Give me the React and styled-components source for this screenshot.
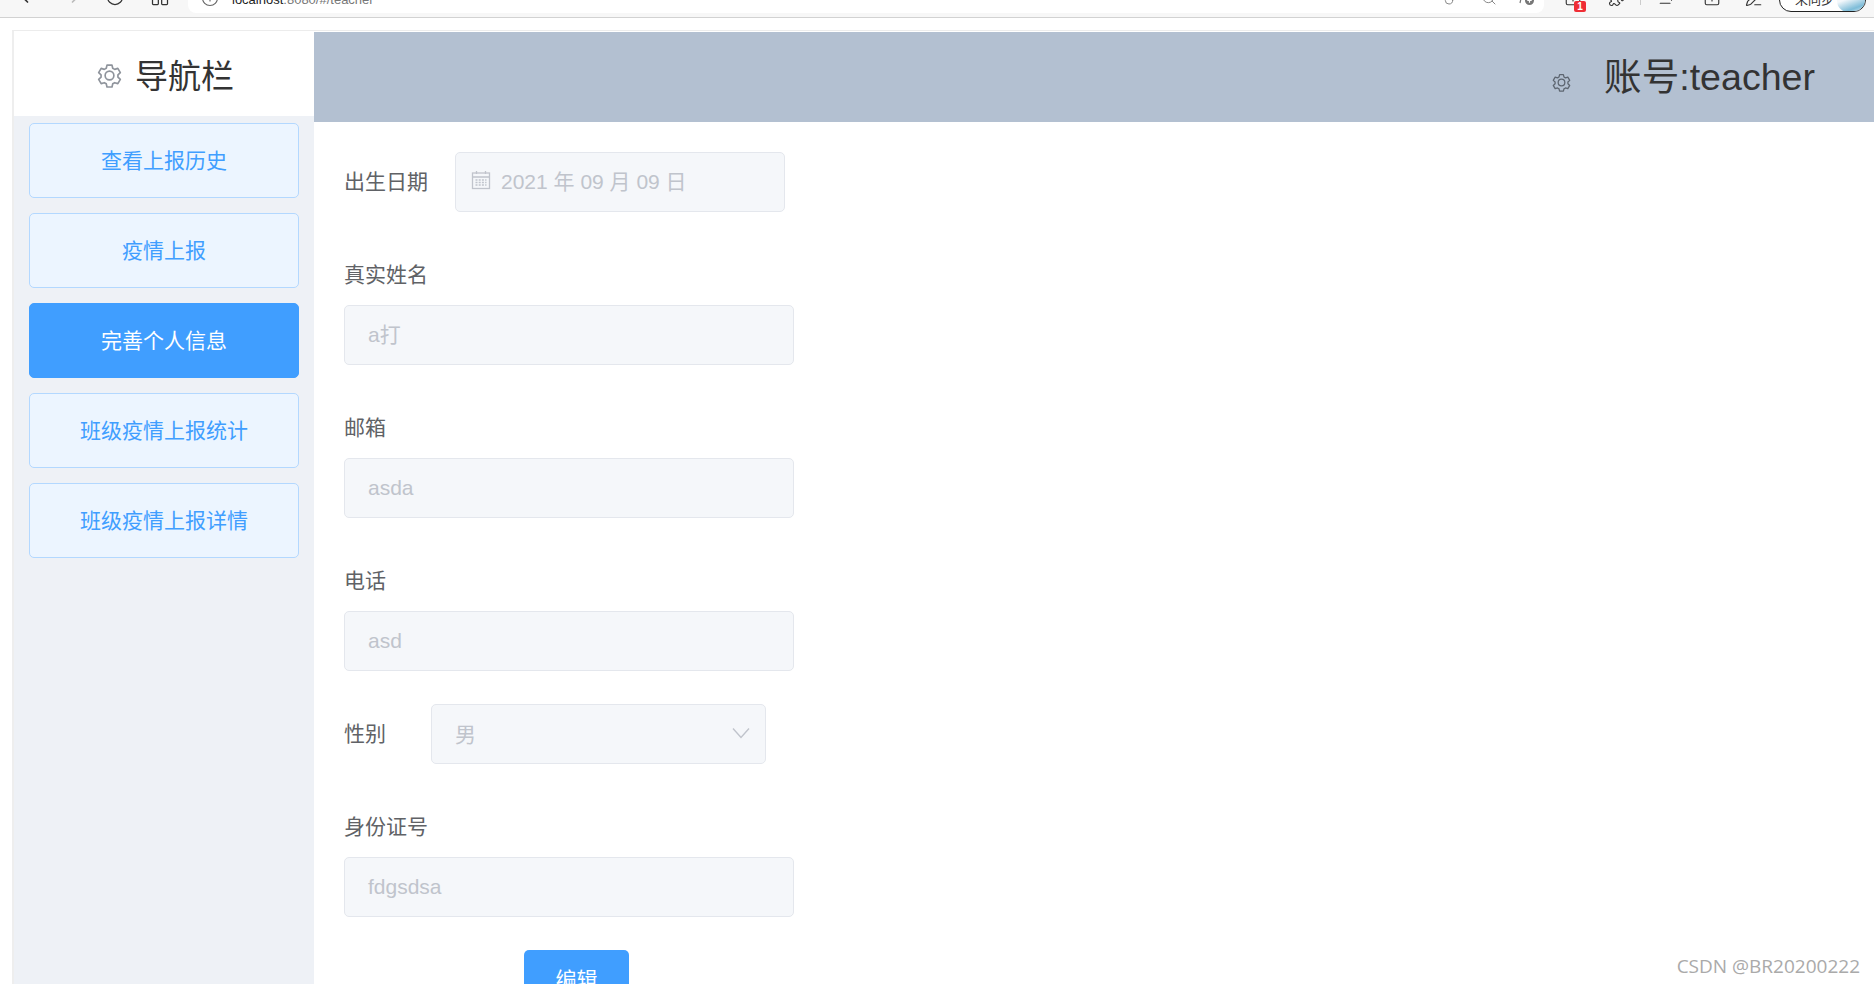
import React from 'react';
import styled, { createGlobalStyle } from 'styled-components';
import { ChevronLeft, ChevronRight, RotateCw, LayoutGrid, Info, Key, Search, Puzzle, ListPlus, SquarePlus, PenLine } from 'lucide-react';

const GlobalStyle = createGlobalStyle`
  html, body { margin: 0; padding: 0; background: #fff; height: 100%; overflow: hidden; }
  body { font-family: "Liberation Sans", "Noto Sans CJK SC", sans-serif; }
`;

const Page = styled.div`
  position: relative;
  width: 1874px;
  height: 984px;
  overflow: hidden;
  background: #fff;
`;

const BrowserBar = styled.div`
  height: 17px;
  background: #f7f7f7;
  border-bottom: 1px solid #d2d2d2;
  display: flex;
  align-items: flex-end;
  overflow: hidden;
`;

const BarIcon = styled.span`
  position: relative;
  flex: none;
  display: block;
  line-height: 0;
  margin-left: ${p => p.$ml}px;
  margin-right: ${p => p.$mr || 0}px;
  margin-bottom: ${p => p.$mb || 10}px;
  color: ${p => p.$c || '#333'};
`;

const Address = styled.div`
  width: 1356px;
  height: 13px;
  margin-left: 18px;
  margin-bottom: 4px;
  flex: none;
  background: #fff;
  border-radius: 0 0 8px 8px;
  display: flex;
  align-items: flex-end;
  overflow: hidden;
  font-size: 13px;
  color: #777;
`;

const Url = styled.span`
  margin-left: 13px;
  margin-bottom: 6px;
  line-height: 15px;
  white-space: nowrap;
  b { color: #222; font-weight: 400; }
`;

const Spacer = styled.span`
  flex: 1;
`;

const Badge = styled.span`
  position: absolute;
  left: 10px;
  top: 12px;
  width: 12px;
  height: 11px;
  background: #ef2d35;
  border-radius: 2px;
  color: #fff;
  font-size: 10px;
  font-weight: 700;
  line-height: 11px;
  text-align: center;
`;

const Divider = styled.span`
  flex: none;
  width: 1px;
  height: 5px;
  margin: 0 0 12px 14px;
  background: #ccc;
`;

const Profile = styled.div`
  position: relative;
  flex: none;
  width: 87px;
  height: 24px;
  margin: 0 0 5px 16px;
  border: 1px solid #222;
  border-radius: 13px;
  background: #fff;
  font-size: 13px;
  color: #333;
  overflow: hidden;
  line-height: 22px;
  padding-left: 15px;
  box-sizing: border-box;
`;

const Avatar = styled.span`
  position: absolute;
  right: 0;
  top: 0;
  width: 28px;
  height: 24px;
  background: linear-gradient(160deg, #f4f8fb 40%, #7dbcd8 75%, #e4f1f7);
  border-radius: 50%;
`;

const Shell = styled.div`
  display: flex;
  margin: 12px 0 0 12px;
  height: 955px;
  border-left: 2px solid #eeeeee;
  border-top: 1px solid #ececec;
`;

const Side = styled.aside`
  width: 300px;
  flex: none;
  display: flex;
  flex-direction: column;
`;

const Logo = styled.div`
  height: 85px;
  flex: none;
  padding-left: 83px;
  background: #fff;
  display: flex;
  align-items: center;
  gap: 13px;
  font-size: 33px;
  color: #333;
  svg { color: #8f949c; margin-top: 3px; }
`;

const Menu = styled.nav`
  flex: 1;
  background: #eef1f6;
  padding: 7px 0 0 15px;
  display: flex;
  flex-direction: column;
  gap: 15px;
`;

const MenuButton = styled.div`
  width: 270px;
  height: 75px;
  box-sizing: border-box;
  padding-bottom: 4px;
  border-radius: 5px;
  border: 1px solid ${p => (p.$active ? '#409eff' : '#b3d8ff')};
  background: ${p => (p.$active ? '#409eff' : '#ecf5ff')};
  color: ${p => (p.$active ? '#fff' : '#409eff')};
  font-size: 21px;
  display: flex;
  align-items: center;
  justify-content: center;
`;

const Main = styled.main`
  flex: 1;
  min-width: 0;
  display: flex;
  flex-direction: column;
`;

const Header = styled.header`
  height: 90px;
  flex: none;
  margin-top: 1px;
  background: #b3c0d1;
  display: flex;
  align-items: center;
  justify-content: flex-end;
  padding-right: 59px;
  gap: 33px;
  font-size: 37.6px;
  color: #333;
  svg { color: #5d6570; margin-top: 10px; }
`;

const HeaderName = styled.span`
  margin-bottom: 8px;
`;

const Form = styled.div`
  flex: none;
  padding: 30px 0 0 30px;
  display: flex;
  flex-direction: column;
`;

const InlineField = styled.div`
  display: flex;
  align-items: center;
  flex: none;
  height: 60px;
  margin-bottom: 48px;
`;

const StackField = styled.div`
  display: flex;
  flex-direction: column;
  flex: none;
  margin-bottom: ${p => p.$mb}px;
`;

const Label = styled.label`
  font-size: 21px;
  line-height: 30px;
  color: #606266;
  width: ${p => (p.$w ? `${p.$w}px` : 'auto')};
  flex: none;
  margin-bottom: ${p => p.$mb || 0}px;
`;

const Control = styled.div`
  box-sizing: border-box;
  flex: none;
  width: ${p => p.$w}px;
  height: 60px;
  background: #f5f7fa;
  border: 1px solid #e4e7ed;
  border-radius: 5px;
  color: #c0c4cc;
  font-size: 21px;
  display: flex;
  align-items: center;
  padding: 0 0 ${p => p.$pb || 0}px ${p => p.$pl || 23}px;
  gap: 10px;
`;

const Arrow = styled.span`
  margin-left: auto;
  margin-right: 15px;
  line-height: 0;
`;

const SaveButton = styled.div`
  width: 105px;
  height: 60px;
  flex: none;
  margin-left: 180px;
  box-sizing: border-box;
  padding-bottom: 4px;
  background: #409eff;
  color: #fff;
  font-size: 21px;
  border-radius: 5px;
  display: flex;
  align-items: center;
  justify-content: center;
`;

const Watermark = styled.div`
  position: absolute;
  right: 14px;
  bottom: 5px;
  font-family: "Open Sans", sans-serif;
  font-size: 19px;
  color: #aaa;
`;

const Gear = ({ size, sw = 1.6 }) => (
  <svg width={size} height={size} viewBox="0 0 24 24" fill="none" stroke="currentColor" strokeWidth={sw} strokeLinejoin="round">
    <path d="M9.6 2h4.8l.7 3 1.9 1.1 3-.9 2.4 4.1-2.3 2.1v2.2l2.3 2.1-2.4 4.1-3-.9-1.9 1.1-.7 3H9.6l-.7-3L7 18.9l-3 .9-2.4-4.1 2.3-2.1v-2.2L1.6 9.3 4 5.2l3 .9L8.9 5z" />
    <circle cx="12" cy="12" r="4.2" />
  </svg>
);

const Calendar = () => (
  <svg width="20" height="20" viewBox="0 0 20 20" fill="none" stroke="currentColor" strokeWidth="1.3">
    <rect x="1.5" y="3" width="17" height="15.5" />
    <path d="M1.5 7h17M5.5 1v3M14.5 1v3" />
    <path d="M4.5 10h11M4.5 12.5h11M4.5 15h11" strokeDasharray="2 1.2" />
  </svg>
);

const ChevronDownIcon = () => (
  <svg width="18" height="12" viewBox="0 0 18 12" fill="none" stroke="currentColor" strokeWidth="1.4">
    <path d="M1 1.5l8 9 8-9" />
  </svg>
);

const CapturePlus = () => (
  <svg width="16" height="16" viewBox="0 0 16 16" fill="none" stroke="currentColor" strokeWidth="1.2">
    <path d="M1 13l2-9h5" />
    <circle cx="10.5" cy="10.5" r="4.5" fill="currentColor" stroke="none" />
    <path d="M10.5 8.3v4.4M8.3 10.5h4.4" stroke="#fff" />
  </svg>
);

const menuItems = ['查看上报历史', '疫情上报', '完善个人信息', '班级疫情上报统计', '班级疫情上报详情'];

export default function App() {
  return (
    <Page>
      <GlobalStyle />
      <BrowserBar>
        <BarIcon $ml={15}><ChevronLeft size={20} /></BarIcon>
        <BarIcon $ml={30} $c="#bbb"><ChevronRight size={20} /></BarIcon>
        <BarIcon $ml={20}><RotateCw size={20} strokeWidth={1.5} /></BarIcon>
        <BarIcon $ml={25}><LayoutGrid size={20} strokeWidth={1.5} /></BarIcon>
        <Address>
          <BarIcon $ml={13} $mb={6} $c="#666"><Info size={18} strokeWidth={1.5} /></BarIcon>
          <Url><b>localhost</b>:8080/#/teacher</Url>
          <Spacer />
          <BarIcon $ml={0} $mb={7} $c="#888"><Key size={16} strokeWidth={1.5} /></BarIcon>
          <BarIcon $ml={21} $mb={7} $c="#888"><Search size={16} strokeWidth={1.5} /></BarIcon>
          <BarIcon $ml={22} $mr={9} $mb={7} $c="#777"><CapturePlus /></BarIcon>
        </Address>
        <BarIcon $ml={20}><SquarePlus size={18} strokeWidth={1.5} /><Badge>1</Badge></BarIcon>
        <BarIcon $ml={26}><Puzzle size={18} strokeWidth={1.5} /></BarIcon>
        <Divider />
        <BarIcon $ml={17}><ListPlus size={18} strokeWidth={1.5} /></BarIcon>
        <BarIcon $ml={27}><SquarePlus size={18} strokeWidth={1.5} /></BarIcon>
        <BarIcon $ml={24}><PenLine size={18} strokeWidth={1.5} /></BarIcon>
        <Profile>未同步<Avatar /></Profile>
      </BrowserBar>
      <Shell>
        <Side>
          <Logo><Gear size={25} />导航栏</Logo>
          <Menu>
            {menuItems.map((item, i) => (
              <MenuButton key={item} $active={i === 2}>{item}</MenuButton>
            ))}
          </Menu>
        </Side>
        <Main>
          <Header><Gear size={19} /><HeaderName>账号:teacher</HeaderName></Header>
          <Form>
            <InlineField>
              <Label $w={111}>出生日期</Label>
              <Control $w={330} $pl={15} $pb={4}><Calendar />2021 年 09 月 09 日</Control>
            </InlineField>
            <StackField $mb={48}>
              <Label $mb={15}>真实姓名</Label>
              <Control $w={450} $pb={4}>a打</Control>
            </StackField>
            <StackField $mb={48}>
              <Label $mb={15}>邮箱</Label>
              <Control $w={450}>asda</Control>
            </StackField>
            <StackField $mb={33}>
              <Label $mb={15}>电话</Label>
              <Control $w={450}>asd</Control>
            </StackField>
            <InlineField>
              <Label $w={87}>性别</Label>
              <Control $w={335} $pb={2}>男<Arrow><ChevronDownIcon /></Arrow></Control>
            </InlineField>
            <StackField $mb={33}>
              <Label $mb={15}>身份证号</Label>
              <Control $w={450}>fdgsdsa</Control>
            </StackField>
            <SaveButton>编辑</SaveButton>
          </Form>
        </Main>
      </Shell>
      <Watermark>CSDN @BR20200222</Watermark>
    </Page>
  );
}
